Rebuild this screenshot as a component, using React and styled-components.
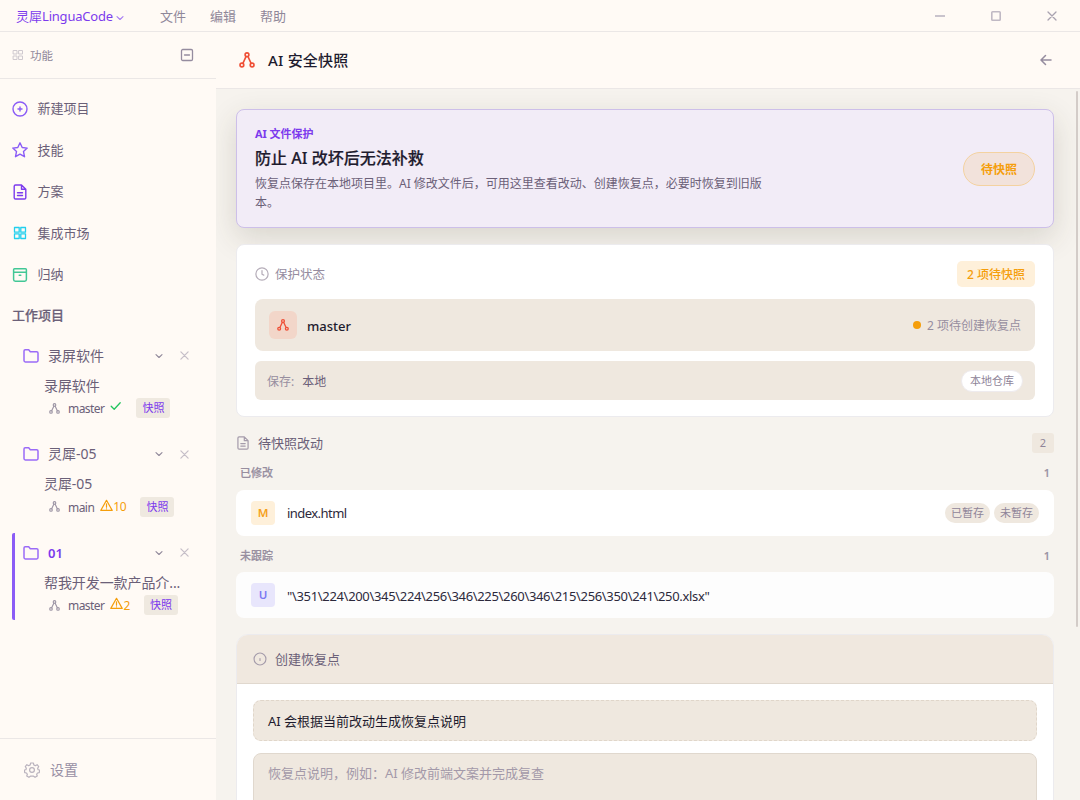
import React from "react";
import styled, { createGlobalStyle } from "styled-components";

const Global = createGlobalStyle`
  * { box-sizing: border-box; }
  body {
    margin: 0;
    overflow: hidden;
    font-family: "Noto Sans", "Noto Sans CJK SC", sans-serif;
    font-size: 13px;
    color: #1e1b2e;
    background: #fffaf5;
  }
  svg { display: block; flex: none; }
`;

const Latin = styled.span`
  letter-spacing: ${(p) => p.$ls ?? -0.4}px;
`;
const Label = styled.span`
  margin-top: -2px;
  letter-spacing: ${(p) => p.$ls ?? 0}px;
`;

const App_ = styled.div`
  width: 1080px;
  height: 800px;
  display: flex;
  flex-direction: column;
`;

/* ---------- title bar ---------- */
const TitleBar = styled.header`
  height: 32px;
  display: flex;
  align-items: center;
  justify-content: space-between;
  border-bottom: 1px solid #ebe7e6;
`;
const MenuGroup = styled.nav`
  display: flex;
  align-items: center;
  padding-left: 16px;
  line-height: 18px;
`;
const Brand = styled.div`
  display: flex;
  align-items: center;
  gap: 3px;
  width: 144px;
  color: #7c3aed;
  white-space: nowrap;
  svg { margin-top: 4px; }
`;
const MenuItem = styled.span`
  width: 50px;
  color: #8f8799;
`;
const WindowButtons = styled.div`
  display: flex;
  color: #a9a2b0;
`;
const WindowButton = styled.div`
  width: 56px;
  display: flex;
  justify-content: center;
`;

/* ---------- sidebar ---------- */
const Body = styled.div`
  flex: 1;
  display: flex;
  min-height: 0;
`;
const Sidebar = styled.aside`
  width: 216px;
  display: flex;
  flex-direction: column;
`;
const SidebarHead = styled.div`
  height: 47px;
  padding: 0 22px 0 12px;
  display: flex;
  align-items: center;
  border-bottom: 1px solid #ebe7e6;
  color: #8f8799;
  font-size: 11.5px;
  svg:last-child { margin-left: auto; }
`;
const SidebarTitle = styled.span`
  margin-left: 6px;
`;
const NavList = styled.div`
  padding-top: 9px;
  color: #6b6078;
`;
const NavItem = styled.div`
  height: 41.5px;
  padding-left: 12px;
  display: flex;
  align-items: center;
  gap: 9.5px;
`;
const SectionTitle = styled.div`
  height: 40px;
  padding: 0 0 2px 12px;
  display: flex;
  align-items: center;
  font-weight: 500;
  -webkit-text-stroke: 0.2px;
  color: #6b6078;
`;
const Project = styled.div`
  height: 87px;
  margin: 0 12px 11.5px;
  border-left: 3px solid ${(p) => (p.$active ? "#8b5cf6" : "transparent")};
  border-radius: 2px;
  color: #6b6078;
`;
const ProjectHead = styled.div`
  height: 40px;
  padding: 0 15.5px 0 8px;
  display: flex;
  align-items: center;
`;
const ProjectName = styled.span`
  flex: 1;
  margin: -2px 0 0 9px;
  padding-top: ${(p) => (p.$active ? 2 : 0)}px;
  color: ${(p) => (p.$active ? "#7c3aed" : "inherit")};
  font-weight: ${(p) => (p.$active ? 600 : 400)};
  font-size: ${(p) => (p.$active ? 13 : 14)}px;
`;
const HeadIcons = styled.div`
  display: flex;
  align-items: center;
  gap: 17px;
`;
const SessionName = styled.div`
  height: 20px;
  line-height: 20px;
  margin-left: 29px;
  font-size: 14px;
  letter-spacing: -0.08px;
  white-space: nowrap;
`;
const Branch = styled.div`
  height: 25px;
  padding-left: 34px;
  display: flex;
  align-items: center;
  font-size: 12px;
`;
const BranchName = styled.span`
  margin: 1px 6px 0 8px;
`;
const Warn = styled.span`
  display: flex;
  align-items: center;
  letter-spacing: -0.3px;
  color: #f59e0b;
  svg { margin-top: -3px; }
`;
const CheckMark = styled.span`
  margin-top: -4px;
`;
const SnapTag = styled.span`
  height: 20px;
  line-height: 20px;
  padding: 0 6px;
  margin-left: 14px;
  border-radius: 3px;
  background: #efe9e0;
  color: #7c3aed;
  font-size: 11px;
`;
const Settings = styled.div`
  height: 62px;
  margin-top: auto;
  padding-left: 24px;
  border-top: 1px solid #ebe7e6;
  display: flex;
  align-items: center;
  gap: 10px;
  font-size: 14px;
  color: #988fa4;
`;

/* ---------- main ---------- */
const Main = styled.main`
  flex: 1;
  min-width: 0;
  display: flex;
  flex-direction: column;
`;
const MainHead = styled.div`
  height: 57px;
  padding: 0 28px 0 23px;
  border-bottom: 1px solid #ebe7e6;
  display: flex;
  align-items: center;
  gap: 13px;
  font-size: 15px;
  font-weight: 500;
  svg:last-child { margin-left: auto; }
`;
const ScrollArea = styled.div`
  flex: 1;
  min-height: 0;
  overflow: hidden;
  display: flex;
  background: #f6f3ee;
`;
const Content = styled.div`
  width: 838px;
  padding: 20px 0 0 20px;
  display: flex;
  flex-direction: column;
`;
const ScrollTrack = styled.div`
  margin: 2px 2px 0 auto;
`;
const ScrollThumb = styled.div`
  width: 2px;
  height: 536px;
  border-radius: 1px;
  background: #d3ccc8;
`;
const Hero = styled.section`
  flex: none;
  height: 119px;
  padding: 0 18px;
  border: 1px solid #cdbfe9;
  border-radius: 8px;
  background: #f2ecf7;
  box-shadow: 0 10px 30px rgba(60, 55, 40, 0.16);
  display: flex;
  align-items: center;
  justify-content: space-between;
`;
const HeroText = styled.div`
  width: 520px;
`;
const Eyebrow = styled.div`
  margin-top: -1px;
  font-size: 11px;
  line-height: 18px;
  font-weight: 700;
  letter-spacing: -0.05px;
  color: #7c3aed;
`;
const HeroTitle = styled.h2`
  margin: 3px 0 3px;
  font-size: 16px;
  line-height: 25px;
  font-weight: 500;
  letter-spacing: 0.03px;
  -webkit-text-stroke: 0.2px;
`;
const HeroDesc = styled.p`
  margin: 0;
  font-size: 12px;
  line-height: 19px;
  color: #6b6078;
`;
const HeroStatus = styled.div`
  width: 72px;
  height: 34px;
  line-height: 33px;
  text-align: center;
  border: 1px solid #f4d2a0;
  border-radius: 17px;
  background: #f2e2db;
  color: #f59e0b;
  font-size: 12px;
  font-weight: 700;
`;
const StatusCard = styled.section`
  flex: none;
  position: relative;
  height: 173px;
  margin-top: 16px;
  padding: 16px 18px;
  border: 1px solid #ecebee;
  border-radius: 8px;
  background: #fff;
  display: flex;
  flex-direction: column;
`;
const CardHead = styled.div`
  height: 26px;
  margin-bottom: 12px;
  display: flex;
  align-items: center;
  gap: 6px;
  color: #958c9f;
  font-size: 12.5px;
`;
const PendingTag = styled.span`
  margin-left: auto;
  height: 26px;
  line-height: 27px;
  padding: 0 10px;
  border-radius: 5px;
  background: #fef0da;
  color: #f59e0b;
  font-size: 12px;
  font-weight: 500;
`;
const BranchRow = styled.div`
  height: 52px;
  margin-bottom: 10px;
  padding: 0 14px;
  border-radius: 8px;
  background: #efe8df;
  display: flex;
  align-items: center;
`;
const BranchIcon = styled.div`
  width: 28px;
  height: 28px;
  border-radius: 6px;
  background: #f2d6c9;
  display: flex;
  align-items: center;
  justify-content: center;
`;
const BranchTitle = styled.span`
  margin: 2px 0 0 10px;
  font-weight: 500;
  font-size: 13px;
`;
const RowStatus = styled.span`
  margin-left: auto;
  display: flex;
  align-items: center;
  gap: 6px;
  font-size: 12px;
  color: #978e9f;
`;
const Dot = styled.i`
  width: 8px;
  height: 8px;
  border-radius: 50%;
  background: #f59e0b;
`;
const StorageRow = styled.div`
  height: 39px;
  padding: 0 12px;
  border-radius: 6px;
  background: #efe8df;
  display: flex;
  align-items: center;
  font-size: 12px;
  color: #978e9f;
`;
const StorageValue = styled.span`
  margin-left: 8px;
  color: #6b5f78;
`;
const RepoTag = styled.span`
  margin-left: auto;
  height: 22px;
  line-height: 20px;
  padding: 0 8px;
  border: 1px solid #eeebee;
  border-radius: 11px;
  background: #fff;
  font-size: 11px;
  color: #8f8599;
`;
const ChangesHead = styled.div`
  flex: none;
  height: 20px;
  margin-top: 16px;
  display: flex;
  align-items: center;
  gap: 8px;
  color: #6b6078;
`;
const CountTag = styled.span`
  width: 22px;
  height: 20px;
  line-height: 20px;
  margin-left: auto;
  text-align: center;
  border-radius: 3px;
  background: #efe8df;
  color: #8f8599;
  font-size: 11px;
`;
const GroupLabel = styled.div`
  flex: none;
  height: 18px;
  margin-top: ${(p) => p.$top}px;
  margin-bottom: ${(p) => p.$bottom}px;
  padding: 0 4px;
  display: flex;
  align-items: center;
  justify-content: space-between;
  font-size: 11px;
  font-weight: 500;
  -webkit-text-stroke: 0.2px;
  color: #978e9f;
`;
const FileRow = styled.div`
  flex: none;
  height: 46px;
  padding: 0 15px;
  border-radius: 8px;
  background: ${(p) => p.$bg};
  display: flex;
  align-items: center;
  gap: 4px;
`;
const FileMark = styled.span`
  width: 24px;
  height: 24px;
  line-height: 24px;
  margin-right: 8px;
  text-align: center;
  border-radius: 4px;
  background: ${(p) => p.$bg};
  color: ${(p) => p.$color};
  font-size: 11.5px;
  font-weight: 600;
`;
const FileName = styled.span`
  flex: 1;
  padding-top: ${(p) => p.$top ?? 0}px;
  letter-spacing: ${(p) => p.$ls}px;
  color: #2c293b;
`;
const StageTag = styled.span`
  width: 45px;
  height: 20px;
  line-height: 20px;
  text-align: center;
  border-radius: 10px;
  background: #efe8df;
  color: #8f8599;
  font-size: 11px;
`;
const CreateCard = styled.section`
  flex: none;
  margin-top: 16px;
  height: 240px;
  border: 1px solid #ecebee;
  border-radius: 12px 12px 0 0;
  overflow: hidden;
  background: #fff;
`;
const CreateHead = styled.div`
  height: 49px;
  padding-left: 16px;
  background: #f0e8df;
  border-bottom: 1px solid #e0d8ce;
  display: flex;
  align-items: center;
  gap: 8px;
  color: #6b6078;
`;
const CreateBody = styled.div`
  padding: 16px;
  display: flex;
  flex-direction: column;
  gap: 12px;
`;
const Hint = styled.div`
  height: 41px;
  line-height: 40px;
  padding: 0 14px;
  border: 1px dashed #e0d6ca;
  border-radius: 8px;
  background: #efe8df;
`;
const MessageBox = styled.div`
  height: 90px;
  padding: 9px 14px;
  line-height: 20px;
  border: 1px solid #e0d8ce;
  border-radius: 8px;
  background: #efe8df;
  color: #a399a9;
`;

/* ---------- icons ---------- */
const Svg = ({ size = 16, color = "currentColor", w = 1.3, box = 16, children }) => (
  <svg width={size} height={size} viewBox={`0 0 ${box} ${box}`} fill="none" stroke={color} strokeWidth={w} strokeLinecap="round" strokeLinejoin="round">
    {children}
  </svg>
);
const Nodes = (p) => (
  <Svg {...p}>
    <circle cx="8" cy="2.8" r="1.900" />
    <circle cx="2.900" cy="13" r="1.900" />
    <circle cx="13.100" cy="13" r="1.900" />
    <path d="M7 4.600 3.900 11.300M9 4.600l3.100 6.700" />
  </Svg>
);
const Chevron = (p) => (
  <Svg box={8} w={1.1} {...p}><path d="m1 2.7 3 2.8 3-2.8" /></Svg>
);
const Cross = (p) => (
  <Svg box={10} w={1.1} {...p}><path d="m1 1 8 8M9 1 1 9" /></Svg>
);
const Folder = () => (
  <Svg w={1.5} color="#9b6bf7">
    <path d="M2.2 1.700h3.500l1.600 2h6.400q1.300 0 1.300 1.300v7.600q0 1.300-1.300 1.300H2.300Q1 13.900 1 12.600V3Q1 1.700 2.200 1.700Z" />
  </Svg>
);
const Doc = (p) => (
  <Svg {...p}>
    <path d="M9.500 1H3.500Q2.200 1 2.200 2.300v11.400Q2.200 15 3.500 15h9Q13.800 15 13.800 13.700V5.300ZM9.500 1v4.300h4.300M5.500 8.700h5M5.500 11.500h5" />
  </Svg>
);
const Warning = () => (
  <Svg size={13} w={1.5} color="#f59e0b"><path d="M8 1.600 15 14H1ZM8 6v4M8 12v.1" /></Svg>
);
const Check = () => (
  <Svg size={12} box={12} w={1.3} color="#22c55e"><path d="m1.200 6.200 3 3 6-6.500" /></Svg>
);

const navItems = [
  { label: "新建项目", icon: <Svg color="#8b5cf6" w={1.4}><circle cx="8" cy="8" r="7" /><path d="M8 6v4M6 8h4" /></Svg> },
  { label: "技能", icon: <Svg color="#8b5cf6" w={1.400}><path d="m8 .8 2.200 4.700 5 .6-3.700 3.500 1 5.100L8 12.200l-4.500 2.500 1-5.100L.8 6.100l5-.6Z" /></Svg> },
  { label: "方案", icon: <Doc color="#7c3aed" w={1.400} /> },
  { label: "集成市场", icon: <Svg color="#22cfee" w={1.300}><path d="M2.500 2.500h4.700v4.700H2.500ZM8.800 2.500h4.700v4.700H8.800ZM2.500 8.800h4.700v4.700H2.500ZM8.800 8.800h4.700v4.700H8.800Z" /></Svg> },
  { label: "归纳", icon: <Svg color="#42c796" w={1.500}><path d="M2.500 1.700h11q.9 0 .9 1v2.500H1.600V2.700q0-1 .9-1ZM1.600 5.200v7.400q0 1.700 1.700 1.700h9.400q1.700 0 1.700-1.700V5.200M7.200 8.200h1.600" /></Svg> },
];

const projects = [
  { name: "录屏软件", session: "录屏软件", branch: "master" },
  { name: "灵犀-05", session: "灵犀-05", branch: "main", warn: "10" },
  { name: "01", session: "帮我开发一款产品介...", branch: "master", warn: "2", active: true },
];

export default function App() {
  return (
    <App_>
      <Global />
      <TitleBar>
        <MenuGroup>
          <Brand><span>灵犀<Latin $ls={-0.2}>LinguaCode</Latin></span><Chevron size={8} color="#a57bf3" /></Brand>
          <MenuItem>文件</MenuItem><MenuItem>编辑</MenuItem><MenuItem>帮助</MenuItem>
        </MenuGroup>
        <WindowButtons>
          <WindowButton><Svg size={10} box={10} w={2} color="#c9c3cc"><path strokeLinecap="butt" d="M0 5h10" /></Svg></WindowButton>
          <WindowButton><Svg size={10} box={10} w={1.6} color="#c0b9c4"><rect x=".8" y=".8" width="8.400" height="8.400" rx=".8" /></Svg></WindowButton>
          <WindowButton><Cross size={10} w={1.3} /></WindowButton>
        </WindowButtons>
      </TitleBar>
      <Body>
        <Sidebar>
          <SidebarHead>
            <Svg size={12} box={12} w={1} color="#cfc9cf"><path d="M1.500 1.500h3.500v3.500H1.500ZM7 1.500h3.500v3.500H7ZM1.500 7h3.500v3.500H1.500ZM7 7h3.500v3.500H7Z" /></Svg>
            <SidebarTitle>功能</SidebarTitle>
            <Svg size={14} box={14} w={1.3} color="#958c9f"><rect x="1.500" y="1.500" width="11" height="11" rx="1.300" /><path d="M4.500 7h5" /></Svg>
          </SidebarHead>
          <NavList>
            {navItems.map((n) => <NavItem key={n.label}>{n.icon}<Label>{n.label}</Label></NavItem>)}
          </NavList>
          <SectionTitle>工作项目</SectionTitle>
          {projects.map((p) => (
            <Project key={p.name} $active={p.active}>
              <ProjectHead>
                <Folder />
                <ProjectName $active={p.active}>{p.name}</ProjectName>
                <HeadIcons><Chevron size={8} color="#8f8799" /><Cross size={9} w={1.4} color="#c6bfc8" /></HeadIcons>
              </ProjectHead>
              <SessionName>{p.session}</SessionName>
              <Branch>
                <Nodes size={11} color="#9c94a4" w={1.6} />
                <BranchName><Latin $ls={-0.55}>{p.branch}</Latin></BranchName>
                {p.warn ? <Warn><Warning />{p.warn}</Warn> : <CheckMark><Check /></CheckMark>}
                <SnapTag>快照</SnapTag>
              </Branch>
            </Project>
          ))}
          <Settings>
            <Svg w={1.100} color="#b9b2bd" box={24}>
              <g strokeWidth="1.800">
                <circle cx="12" cy="12" r="3.600" />
                <path d="M10 1.500h4l.8 3 2.200 1 2.700-1.500 2.400 2.800-1.600 2.600.7 2.200 2.300.4-.6 4-2.700.5-1.200 2 .9 2.500-3.300 2-2.200-1.700h-4.800l-2.200 1.700-3.300-2L5 18.500l-1.200-2-2.700-.5-.6-4 2.300-.4.7-2.200-1.600-2.600L4.300 4 7 5.500l2.200-1Z" />
              </g>
            </Svg>
            <Label>设置</Label>
          </Settings>
        </Sidebar>
        <Main>
          <MainHead>
            <Nodes size={16} color="#ef4f36" w={1.600} />
            <Label $ls={0.2}>AI 安全快照</Label>
            <Svg size={12} box={12} w={1.500} color="#958c9f"><path d="M11 6H1.500M5.500 1.500 1 6l4.500 4.500" /></Svg>
          </MainHead>
          <ScrollArea>
            <Content>
              <Hero>
                <HeroText>
                  <Eyebrow>AI 文件保护</Eyebrow>
                  <HeroTitle>防止 AI 改坏后无法补救</HeroTitle>
                  <HeroDesc>恢复点保存在本地项目里。AI 修改文件后，可用这里查看改动、创建恢复点，必要时恢复到旧版本。</HeroDesc>
                </HeroText>
                <HeroStatus>待快照</HeroStatus>
              </Hero>
              <StatusCard>
                <CardHead>
                  <Svg size={14} w={1.400} color="#b5adb9"><circle cx="8" cy="8" r="7" /><path d="M8 4v4.300l2 1" /></Svg>
                  <Label>保护状态</Label>
                  <PendingTag>2 项待快照</PendingTag>
                </CardHead>
                <BranchRow>
                  <BranchIcon><Nodes size={12} color="#ef4f36" w={1.700} /></BranchIcon>
                  <BranchTitle>master</BranchTitle>
                  <RowStatus><Dot />2 项待创建恢复点</RowStatus>
                </BranchRow>
                <StorageRow>保存:<StorageValue>本地</StorageValue><RepoTag>本地仓库</RepoTag></StorageRow>
              </StatusCard>
              <ChangesHead>
                <Doc size={14} color="#a59cab" w={1.400} /><Label>待快照改动</Label><CountTag>2</CountTag>
              </ChangesHead>
              <GroupLabel $top={10} $bottom={9}><span>已修改</span><span>1</span></GroupLabel>
              <FileRow $bg="#ffffff">
                <FileMark $bg="#fef0da" $color="#f5a01b">M</FileMark>
                <FileName $ls={-0.55}>index.html</FileName>
                <StageTag>已暂存</StageTag><StageTag>未暂存</StageTag>
              </FileRow>
              <GroupLabel $top={10} $bottom={8}><span>未跟踪</span><span>1</span></GroupLabel>
              <FileRow $bg="#fdfdfd">
                <FileMark $bg="#e8e6fc" $color="#7b78f2">U</FileMark>
                <FileName $ls={-0.33} $top={2}>{'"\\351\\224\\200\\345\\224\\256\\346\\225\\260\\346\\215\\256\\350\\241\\250.xlsx"'}</FileName>
              </FileRow>
              <CreateCard>
                <CreateHead>
                  <Svg size={14} w={1.300} color="#a59cab"><circle cx="8" cy="8" r="6.800" /><path d="M8 7.600v2" /></Svg>
                  <Label>创建恢复点</Label>
                </CreateHead>
                <CreateBody>
                  <Hint>AI 会根据当前改动生成恢复点说明</Hint>
                  <MessageBox>恢复点说明，例如：AI 修改前端文案并完成复查</MessageBox>
                </CreateBody>
              </CreateCard>
            </Content>
            <ScrollTrack><ScrollThumb /></ScrollTrack>
          </ScrollArea>
        </Main>
      </Body>
    </App_>
  );
}
